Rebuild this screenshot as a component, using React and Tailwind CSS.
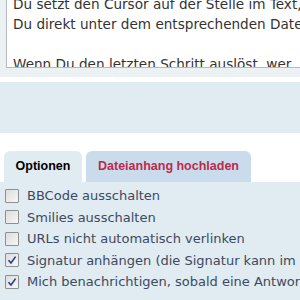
import React from "react";

function Box({ checked }) {
  return (
    <span className="w-[14px] h-[14px] shrink-0 border border-[#8e8f8f] bg-gradient-to-br from-[#dcdcdc] to-[#f7f7f7] flex items-center justify-center rounded-[1px]">
      {checked && (
        <svg width="10" height="10" viewBox="0 0 10 10">
          <path d="M1.5 5.2 L4 8 L8.6 1.6" fill="none" stroke="#2a3a8c" strokeWidth="1.6" />
        </svg>
      )}
    </span>
  );
}

const rows = [
  ["BBCode ausschalten", false],
  ["Smilies ausschalten", false],
  ["URLs nicht automatisch verlinken", false],
  ["Signatur anhängen (die Signatur kann im persönlichen Bereich geändert werden)", true],
  ["Mich benachrichtigen, sobald eine Antwort geschrieben wurde", true],
];

export default function App() {
  return (
    <div className="w-[300px] h-[300px] overflow-hidden bg-white flex flex-col" style={{ fontFamily: '"DejaVu Sans", Verdana, sans-serif' }}>
      <div className="h-[77px] shrink-0 bg-[#ecf1f3] pl-[6px]">
        <div className="h-[68px] bg-white border-l border-b border-[#b4bac0] overflow-hidden pl-[6px] whitespace-nowrap text-[13.6px] leading-[20px] text-[#333]">
          <div className="-mt-[6px]">
            <div>Du setzt den Cursor auf der Stelle im Text, an der</div>
            <div>Du direkt unter dem entsprechenden Dateianhang</div>
            <div>&nbsp;</div>
            <div>Wenn Du den letzten Schritt auslöst, wer</div>
          </div>
        </div>
      </div>
      <div className="h-[5px] shrink-0 bg-white" />
      <div className="h-[51px] shrink-0 bg-[#e1ebf2]" />
      <div className="h-[18px] shrink-0 bg-white" />
      <div className="h-[31px] shrink-0 flex items-stretch pl-[4px] gap-[4px] text-[12.5px] font-bold whitespace-nowrap" style={{ fontFamily: '"Liberation Sans", Arial, sans-serif' }}>
        <div className="w-[78px] bg-[#e1ebf2] rounded-t-[6px] flex items-center justify-center text-[#000]">Optionen</div>
        <div className="w-[165px] bg-[#cadceb] rounded-t-[6px] flex items-center justify-center text-[#bc2a4d]">Dateianhang hochladen</div>
      </div>
      <div className="flex-1 bg-[#e1ebf2] pt-[3px] pl-[5px] text-[13px] text-[#3d4a5e] whitespace-nowrap">
        {rows.map(([label, c]) => (
          <div key={label} className="h-[21.5px] flex items-center gap-[8px]">
            <Box checked={c} />
            <span>{label}</span>
          </div>
        ))}
      </div>
    </div>
  );
}
